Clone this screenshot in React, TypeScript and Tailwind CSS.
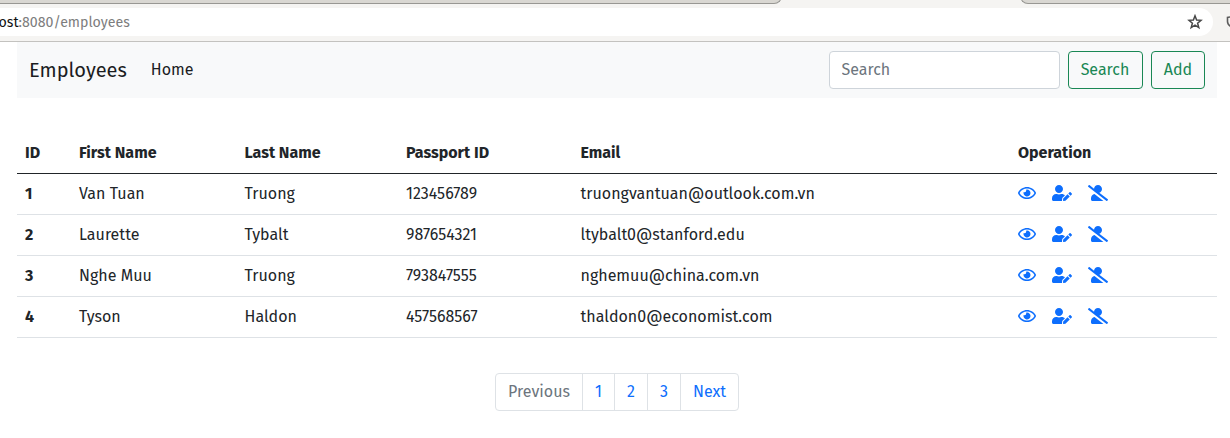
import { FaRegEye, FaUserEdit, FaUserSlash } from "react-icons/fa";

const employees = [
  { id: 1, first: "Van Tuan", last: "Truong", passport: "123456789", email: "truongvantuan@outlook.com.vn" },
  { id: 2, first: "Laurette", last: "Tybalt", passport: "987654321", email: "ltybalt0@stanford.edu" },
  { id: 3, first: "Nghe Muu", last: "Truong", passport: "793847555", email: "nghemuu@china.com.vn" },
  { id: 4, first: "Tyson", last: "Haldon", passport: "457568567", email: "thaldon0@economist.com" },
];

function BrowserBar() {
  return (
    <div className="h-[42px] shrink-0 overflow-hidden border-b border-[#c3c2bf] bg-[#f5f4f2]">
      <div className="flex h-1 items-end justify-between overflow-hidden">
        <div className="h-3 w-[782px] rounded-br-lg border-r border-b border-[#989793] bg-[#d9d7d2]" />
        <div className="h-3 w-[210px] rounded-bl-lg border-b border-l border-[#989793] bg-[#d9d7d2]" />
      </div>
      <div className="mt-1 flex h-7 items-center">
        <div className="flex h-7 w-[1213px] shrink-0 items-center justify-between rounded-r-full bg-white pr-[10px]">
          <div className="-ml-[1.5px] pt-0.5 text-[14.2px] text-[#7d7d7d]">
            <span className="text-[#111111]">ost</span>:8080/employees
          </div>
          <svg width="16" height="16" viewBox="0 0 16 16" fill="none" stroke="#484848" strokeWidth="1.5">
            <path d="M8 1.8 9.6 6 14 6.3 10.6 9.2 11.8 13.6 8 11.2 4.2 13.6 5.4 9.2 2 6.3 6.4 6Z" />
          </svg>
        </div>
        <svg className="ml-[13px] shrink-0" width="14" height="14" viewBox="0 0 14 14" fill="none" stroke="#5c5c5c" strokeWidth="1.6">
          <path d="M7 1.5 12.5 2.5V6.5Q12.5 10.5 7 12.5Q1.5 10.5 1.5 6.5V2.5Z" />
        </svg>
      </div>
    </div>
  );
}

export default function App() {
  return (
    <div className="flex h-[438px] flex-col overflow-hidden bg-white font-['Fira_Sans','Noto_Sans',sans-serif] text-base leading-6 text-[#212529]">
      <BrowserBar />
      <main className="ml-[17px] w-[1200px]">
        <nav className="flex h-14 items-center bg-[#f8f9fa] px-3">
          <a className="text-[20px] text-[#1b1d1f]">Employees</a>
          <a className="ml-6 text-[#1b1d1f]">Home</a>
          <form className="ml-auto flex gap-2">
            <input
              placeholder="Search"
              className="h-[38px] w-[231px] rounded border border-[#ced4da] bg-white px-[11.5px] pb-[2px] placeholder:text-[#6c757d]"
            />
            <button type="button" className="h-[38px] w-[75px] rounded border border-[#198754] pr-px text-[#198754]">Search</button>
            <button type="button" className="h-[38px] w-[54px] rounded border border-[#198754] text-[#198754]">Add</button>
          </form>
        </nav>
        <table className="mt-[34px] w-full table-fixed border-collapse text-left">
          <colgroup>
            <col className="w-[54px]" />
            <col className="w-[165.5px]" />
            <col className="w-[161.5px]" />
            <col className="w-[174.5px]" />
            <col className="w-[437.5px]" />
            <col />
          </colgroup>
          <thead>
            <tr className="h-[41px] border-b border-[#212529]">
              <th className="px-2 pt-0.5">ID</th>
              <th className="px-2 pt-0.5">First Name</th>
              <th className="px-2 pt-0.5">Last Name</th>
              <th className="px-2 pt-0.5">Passport ID</th>
              <th className="px-2 pt-0.5">Email</th>
              <th className="px-2 pt-0.5">Operation</th>
            </tr>
          </thead>
          <tbody>
            {employees.map((e) => (
              <tr key={e.id} className="h-[41px] border-b border-[#dee2e6] tracking-[0.02px]">
                <th className="px-2">{e.id}</th>
                <td className="px-2">{e.first}</td>
                <td className="px-2">{e.last}</td>
                <td className="px-2">{e.passport}</td>
                <td className="px-2">{e.email}</td>
                <td className="px-2 pb-0.5">
                  <div className="flex text-[#0d6efd]">
                    <FaRegEye className="h-4 w-[18px]" />
                    <FaUserEdit className="ml-4 h-4 w-5" />
                    <FaUserSlash className="ml-[16.4px] h-4 w-5" />
                  </div>
                </td>
              </tr>
            ))}
          </tbody>
        </table>
        <div className="mt-[35px] flex justify-center">
          <div className="flex h-[38px] w-[244px] divide-x divide-[#dee2e6] rounded border border-[#dee2e6] text-[#0d6efd]">
            <button className="w-[87px] shrink-0 pt-px text-[#6c757d]">Previous</button>
            <button className="w-8 shrink-0 pt-px">1</button>
            <button className="w-[33px] shrink-0 pt-px">2</button>
            <button className="w-[33px] shrink-0 pt-px">3</button>
            <button className="flex-1 pt-px">Next</button>
          </div>
        </div>
      </main>
    </div>
  );
}
